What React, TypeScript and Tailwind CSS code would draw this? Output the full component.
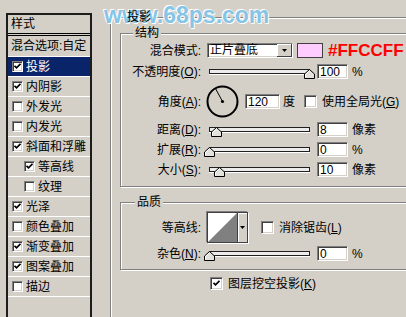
import React from 'react';

const etched = 'border border-[#808080] shadow-[inset_1px_1px_0_#fff,1px_1px_0_#fff]';
const sunken =
  'bg-white border border-t-[#808080] border-l-[#808080] border-b-white border-r-white shadow-[inset_1px_1px_0_#404040,inset_-1px_-1px_0_#d4d0c8]';

const styleRows = [
  { t: '投影', on: true, sel: true },
  { t: '内阴影', on: true },
  { t: '外发光', on: false },
  { t: '内发光', on: false },
  { t: '斜面和浮雕', on: true },
  { t: '等高线', on: true, sub: true },
  { t: '纹理', on: false, sub: true },
  { t: '光泽', on: true },
  { t: '颜色叠加', on: false },
  { t: '渐变叠加', on: true },
  { t: '图案叠加', on: true },
  { t: '描边', on: false },
];

function Check({ on, big }: { on: boolean; big?: boolean }) {
  return (
    <span
      className={`${big ? 'w-[13px] h-[13px]' : 'w-[11px] h-[11px]'} shrink-0 flex items-center justify-center ${sunken}`}
    >
      {on && (
        <svg width="7" height="7" viewBox="0 0 7 7">
          <path d="M0.5 2.8 L2.5 4.8 L6.5 0.8" fill="none" stroke="#000" strokeWidth="1.7" />
        </svg>
      )}
    </span>
  );
}

function Label({ children }: { children: React.ReactNode }) {
  return <span className="w-[80px] shrink-0 text-right whitespace-nowrap">{children}</span>;
}

function Slider({ pos }: { pos: number }) {
  return (
    <div className="relative ml-[3px] w-[111px] h-[15px] shrink-0">
      <div className="absolute left-[5px] top-[5px] w-[101px] h-[5px] border border-[#202020] bg-[#ececec] shadow-[0_1px_0_#fff]" />
      <svg className="absolute top-[5px]" style={{ left: pos }} width="11" height="10" viewBox="0 0 11 10">
        <path d="M0.5 9.5 V5 L5.5 0.5 L10.5 5 V9.5 Z" fill="#e4e2dc" stroke="#000" />
        <path d="M1.5 8.5 V5.4 L5.5 1.8" fill="none" stroke="#fff" />
      </svg>
    </div>
  );
}

function Field({ v, className }: { v: string; className: string }) {
  return <div className={`${className} h-[15px] shrink-0 pl-[2px] flex items-center leading-none ${sunken}`}>{v}</div>;
}

function SliderRow({ label, pos, v, unit }: { label: React.ReactNode; pos: number; v: string; unit: string }) {
  return (
    <div className="mt-[5px] h-[15px] flex items-center">
      <Label>{label}</Label>
      <Slider pos={pos} />
      <Field v={v} className="ml-[2px] w-[31px]" />
      <span className="ml-[4px]">{unit}</span>
    </div>
  );
}

function StyleList() {
  return (
    <div className="ml-[6px] mt-[13px] w-[86px] h-[320px] shrink-0 border-2 border-[#1c1c1c] flex flex-col">
      <div className="h-[21px] pl-[3px] flex items-center border-b-[3px] border-double border-black">样式</div>
      <div className="h-[20px] pl-[3px] flex items-center whitespace-nowrap">混合选项:自定</div>
      {styleRows.map((s) => (
        <div
          key={s.t}
          className={`h-[20px] border-t border-white flex items-center gap-[3px] whitespace-nowrap ${
            s.sub ? 'pl-[16px]' : 'pl-[4px]'
          } ${s.sel ? 'bg-[#0a246a] text-white' : ''}`}
        >
          <Check on={s.on} />
          <span>{s.t}</span>
        </div>
      ))}
      <div className="border-t border-white" />
    </div>
  );
}

function DropShadowPanel() {
  return (
    <div className={`relative ml-[18px] mt-[17px] w-[330px] h-[320px] shrink-0 pl-[9px] pt-[15px] ${etched}`}>
      <span className="absolute left-[14px] -top-[8px] px-[2px] z-20">投影</span>

      {/* 结构 */}
      <div className={`relative w-[300px] h-[154px] flex flex-col ${etched}`}>
        <span className="absolute left-[12px] -top-[8px] px-[2px] bg-[#d4d0c8]">结构</span>

        <div className="mt-[9px] h-[15px] flex items-center">
          <Label>混合模式:</Label>
          <div className={`ml-[6px] w-[86px] h-[15px] shrink-0 flex ${sunken}`}>
            <span className="flex-1 pl-[2px] leading-[13px] whitespace-nowrap">正片叠底</span>
            <span className="w-[15px] h-[13px] bg-[#d4d0c8] flex items-center justify-center shadow-[inset_-1px_-1px_0_#404040,inset_1px_1px_0_#fff]">
              <svg width="5" height="3" viewBox="0 0 5 3">
                <path d="M0 0 H5 L2.5 3 Z" fill="#000" />
              </svg>
            </span>
          </div>
          <span className="ml-[4px] w-[26px] h-[15px] shrink-0 border border-[#404040] bg-[#ffccff]" />
          <span className="ml-[5px] text-[17px] leading-none font-bold text-[#ff0000] whitespace-nowrap">#FFCCFF</span>
        </div>

        <div className="mt-[6px] h-[15px] flex items-center">
          <Label>
            不透明度(<u>O</u>):
          </Label>
          <Slider pos={100} />
          <Field v="100" className="ml-[2px] w-[31px]" />
          <span className="ml-[4px]">%</span>
        </div>

        <div className="mt-[6px] h-[33px] flex items-center">
          <Label>
            角度(<u>A</u>):
          </Label>
          <svg className="ml-[5px] shrink-0" width="33" height="33" viewBox="0 0 33 33">
            <circle cx="16.5" cy="16.5" r="15" fill="none" stroke="#000" strokeWidth="2" />
            <line x1="16.5" y1="16.5" x2="9.5" y2="3.5" stroke="#000" strokeWidth="1" />
            <circle cx="16.5" cy="16.5" r="1.6" fill="#000" />
          </svg>
          <Field v="120" className="ml-[6px] w-[35px]" />
          <span className="ml-[3px]">度</span>
          <span className="ml-[9px]">
            <Check on={false} big />
          </span>
          <span className="ml-[5px] whitespace-nowrap">
            使用全局光(<u>G</u>)
          </span>
        </div>

        <div className="-mt-[1px]">
          <SliderRow label={<>距离(<u>D</u>):</>} pos={7} v="8" unit="像素" />
        </div>
        <SliderRow label={<>扩展(<u>R</u>):</>} pos={0} v="0" unit="%" />
        <SliderRow label={<>大小(<u>S</u>):</>} pos={10} v="10" unit="像素" />
      </div>

      {/* 品质 */}
      <div className={`relative mt-[15px] w-[300px] h-[68px] flex flex-col ${etched}`}>
        <span className="absolute left-[14px] -top-[8px] px-[2px] bg-[#d4d0c8]">品质</span>

        <div className="mt-[9px] h-[31px] flex items-center">
          <Label>等高线:</Label>
          <div className="ml-[6px] w-[41px] h-[31px] shrink-0 flex border border-[#404040] shadow-[-1px_-1px_0_#808080,1px_1px_0_#fff]">
            <svg width="29" height="29" viewBox="0 0 29 29" className="shrink-0">
              <rect width="29" height="29" fill="#fff" />
              <path d="M0 29 L29 0 V29 Z" fill="#808080" />
            </svg>
            <span className="w-[10px] h-full border-l border-[#404040] bg-[#d4d0c8] flex items-center justify-center shadow-[inset_1px_1px_0_#fff]">
              <svg width="5" height="3" viewBox="0 0 5 3">
                <path d="M0 0 H5 L2.5 3 Z" fill="#000" />
              </svg>
            </span>
          </div>
          <span className="ml-[13px]">
            <Check on={false} big />
          </span>
          <span className="ml-[5px] whitespace-nowrap">
            消除锯齿(<u>L</u>)
          </span>
        </div>

        <div className="mt-[3px] h-[15px] flex items-center">
          <Label>
            杂色(<u>N</u>):
          </Label>
          <Slider pos={0} />
          <Field v="0" className="ml-[2px] w-[31px]" />
          <span className="ml-[4px]">%</span>
        </div>
      </div>

      <div className="mt-[7px] h-[13px] pl-[90px] flex items-center">
        <Check on big />
        <span className="ml-[5px] whitespace-nowrap">
          图层挖空投影(<u>K</u>)
        </span>
      </div>
    </div>
  );
}

export default function App() {
  return (
    <div className="relative w-[406px] h-[317px] overflow-hidden bg-[#d4d0c8] text-black text-[12px] leading-[14px] font-['Liberation_Sans','Noto_Sans_CJK_SC',sans-serif] flex items-start">
      <StyleList />
      <DropShadowPanel />
      <div className="absolute left-[104px] top-[4px] z-10 pointer-events-none text-[23px] leading-[23px] font-bold text-[#86c5e6] [text-shadow:0_0_1px_#fff,0_0_2px_#fff,1px_1px_0_#fff,-1px_-1px_0_#fff]">
        www.68ps.com
      </div>
    </div>
  );
}
